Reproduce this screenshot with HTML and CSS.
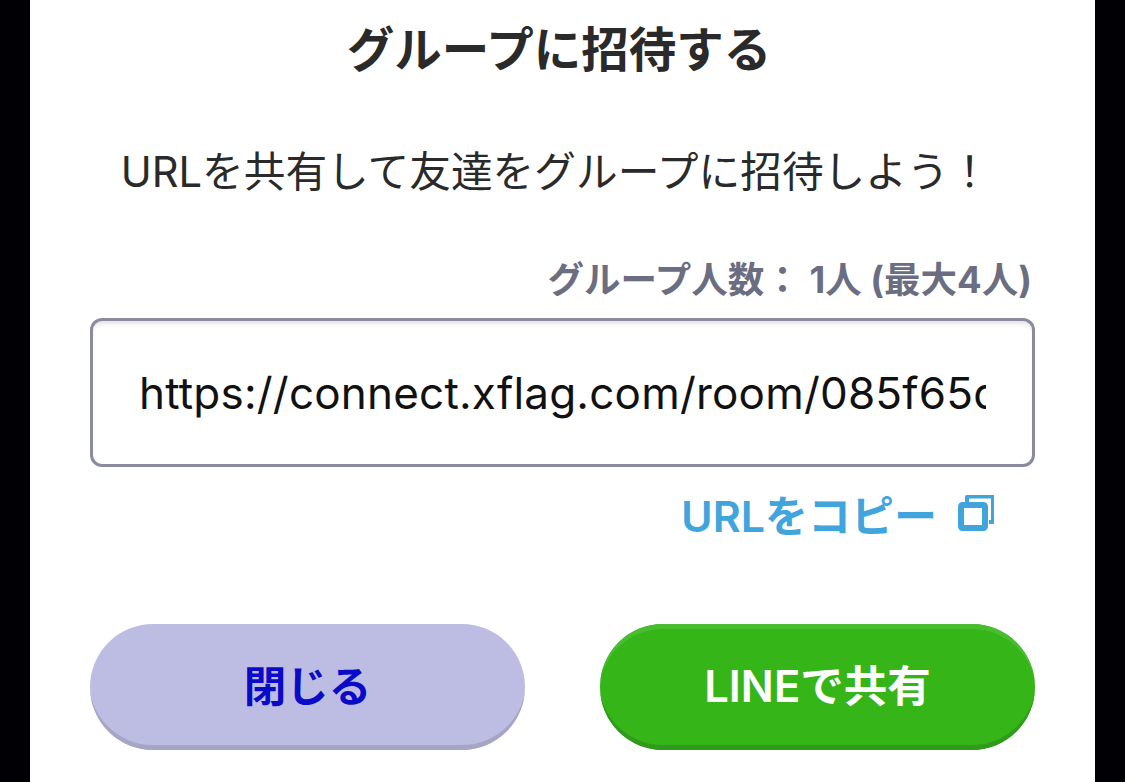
FILE: index.html
```html
<!DOCTYPE html>
<html lang="ja">
<head>
<meta charset="utf-8">
<title>グループに招待する</title>
<link rel="stylesheet" href="styles.css">
</head>
<body>
<main class="dialog">
  <h1 class="title">グループに招待する</h1>
  <p class="lead">URLを共有して友達をグループに招待しよう！</p>
  <p class="count">グループ人数： 1人 (最大4人)</p>
  <div class="url-box"><span class="url-text">https://connect.xflag.com/room/085f65d</span></div>
  <a class="copy">
    <span>URLをコピー</span>
    <svg class="copy-icon" viewBox="0 0 36 36" width="36" height="36" aria-hidden="true">
      <path d="M9 8V2.5a1 1 0 0 1 1-1H34a1 1 0 0 1 1 1V26a1 1 0 0 1-1 1h-3" fill="none" stroke="#3fa5dc" stroke-width="4"/>
      <rect x="3" y="10" width="24" height="23" rx="1.5" fill="none" stroke="#3fa5dc" stroke-width="6"/>
    </svg>
  </a>
  <div class="actions">
    <button class="btn btn-close">閉じる</button>
    <button class="btn btn-line">LINEで共有</button>
  </div>
</main>
</body>
</html>
```

FILE: styles.css
```css
* { box-sizing: border-box; }
html, body { margin: 0; height: 782px; overflow: hidden; background: #000005; }
body {
  font-family: "Inter", "Noto Sans CJK JP", sans-serif;
  padding: 0 30px;
}
.dialog {
  background: #fff;
  height: 782px;
  padding: 0 60px;
  display: flex;
  flex-direction: column;
  color: #222;
}
.title {
  margin: 20px 0 0;
  height: 60px;
  line-height: 60px;
  padding-right: 7px;
  font-size: 47.5px;
  font-weight: 700;
  text-align: center;
  color: #2a2a2a;
}
.lead {
  margin: 62px 0 0;
  height: 60px;
  line-height: 60px;
  padding-right: 14px;
  font-size: 41.7px;
  font-weight: 400;
  text-align: center;
  color: #2a2a2a;
}
.count {
  margin: 56px 0 0;
  height: 44px;
  line-height: 44px;
  padding-right: 3px;
  font-size: 36.5px;
  font-weight: 700;
  text-align: right;
  color: #6b6d80;
}
.url-box {
  margin-top: 16px;
  height: 149px;
  width: 945px;
  border: 3px solid #8b8b9f;
  border-radius: 12px;
  padding: 0 46px;
  display: flex;
  align-items: center;
  box-shadow: inset 0 5px 5px -3px #dddde2;
}
.url-text {
  display: block;
  width: 100%;
  overflow: hidden;
  white-space: nowrap;
  font-size: 44px;
  letter-spacing: 0.2px;
  color: #111;
}
.copy {
  margin-top: 21px;
  padding-right: 41px;
  height: 50px;
  display: flex;
  justify-content: flex-end;
  align-items: center;
  gap: 21px;
  font-size: 43px;
  font-weight: 600;
  color: #3fa5dc;
}
.copy-icon { flex: none; }
.actions {
  margin-top: 86px;
  display: flex;
  justify-content: space-between;
  width: 945px;
}
.btn {
  width: 435px;
  height: 126px;
  border: 0;
  border-radius: 63px;
  padding: 0 0 8px;
  font-family: inherit;
  font-weight: 700;
}
.btn-close {
  font-size: 42.5px;
  background: #bdbde3;
  color: #0a0ac8;
  box-shadow: inset 0 -6px 0 -1px #a5a5c6;
}
.btn-line {
  font-size: 43.5px;
  font-weight: 600;
  background: #35b518;
  color: #fff;
  box-shadow: inset 0 -6px 0 -1px #2f9a1c, inset 0 6px 0 -1px #48bd30;
}
```
